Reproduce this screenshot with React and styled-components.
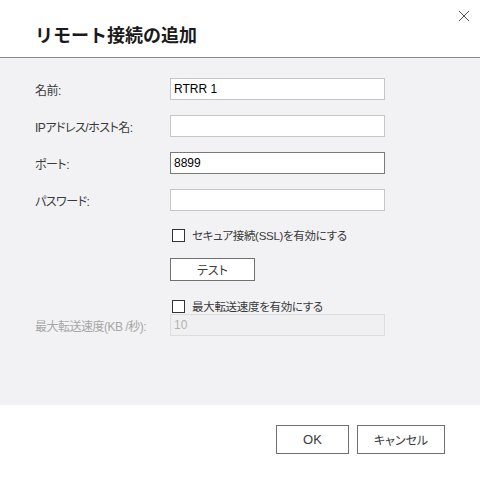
import React from "react";
import styled, { createGlobalStyle } from "styled-components";

const GlobalStyle = createGlobalStyle`
  html, body {
    margin: 0;
    padding: 0;
    background: #ffffff;
  }
  body {
    font-family: "Noto Sans CJK JP", "Liberation Sans", sans-serif;
  }
`;

const font = `"Liberation Sans", "Noto Sans CJK JP", sans-serif`;

const Dialog = styled.div`
  position: relative;
  display: flex;
  flex-direction: column;
  width: 480px;
  height: 480px;
  background: #ffffff;
`;

const Header = styled.div`
  height: 58px;
  box-sizing: border-box;
  padding: 21px 0 0 35px;
  border-bottom: 1px solid #8a8a8a;
`;

const Title = styled.h1`
  margin: 0;
  font-family: "Noto Sans CJK JP", sans-serif;
  font-size: 18px;
  line-height: 26px;
  font-weight: 700;
  color: #1a1a1a;
`;

const CloseButton = styled.button`
  position: absolute;
  top: 8px;
  right: 8px;
  width: 16px;
  height: 16px;
  padding: 0;
  border: none;
  background: none;
  display: flex;
  align-items: center;
  justify-content: center;
  cursor: pointer;
`;

const Body = styled.div`
  height: 347px;
  background: #f2f2f4;
  padding: 0 35px;
  box-sizing: border-box;
  display: flex;
  flex-direction: column;
`;

const Row = styled.div`
  display: flex;
  align-items: center;
  margin-top: ${(p) => p.$top}px;
  height: ${(p) => p.$height || 22}px;
`;

const Label = styled.label`
  width: 135px;
  flex-shrink: 0;
  font-family: ${font};
  font-size: 12px;
  color: ${(p) => (p.$disabled ? "#a6a6a6" : "#3a3a3a")};
  font-feature-settings: "palt";
  letter-spacing: -0.5px;
`;

const TextInput = styled.input`
  width: 215px;
  height: 22px;
  box-sizing: border-box;
  padding: 0 3px;
  margin: 0;
  font-family: ${font};
  font-size: 12px;
  color: ${(p) => (p.disabled ? "#b0b0b0" : "#000000")};
  background: ${(p) => (p.disabled ? "#f0f0f2" : "#ffffff")};
  border: 1px solid ${(p) => (p.$focused ? "#7a7a7a" : p.disabled ? "#dddddd" : "#c6c6c6")};
  outline: none;
`;

const CheckLine = styled.label`
  display: flex;
  align-items: center;
  gap: 7px;
  margin-left: 137px;
  font-family: ${font};
  font-size: 11.5px;
  letter-spacing: -0.3px;
  color: #3a3a3a;
  font-feature-settings: "palt";
`;

const Box = styled.span`
  width: 11px;
  height: 11px;
  border: 1px solid #333333;
  background: #ffffff;
  flex-shrink: 0;
`;

const Button = styled.button`
  height: ${(p) => p.$height || 29}px;
  width: ${(p) => p.$width}px;
  box-sizing: border-box;
  margin: 0;
  padding: 0;
  background: #ffffff;
  border: 1px solid #707070;
  font-family: ${font};
  font-size: ${(p) => p.$size || 12}px;
  color: #3a3a3a;
  font-feature-settings: "palt";
  cursor: pointer;
`;

const TestButton = styled(Button)`
  margin-left: 135px;
`;

const Footer = styled.div`
  flex: 1;
  display: flex;
  justify-content: flex-end;
  align-items: flex-start;
  gap: 8px;
  padding: 20px 35px 0 0;
`;

const CloseIcon = () => (
  <svg width="12" height="12" viewBox="0 0 12 12">
    <path d="M1 1 L11 11 M11 1 L1 11" stroke="#555" strokeWidth="1" fill="none" />
  </svg>
);

const Checkbox = ({ children }) => (
  <CheckLine>
    <Box />
    {children}
  </CheckLine>
);

const App = () => (
  <>
    <GlobalStyle />
    <Dialog>
      <Header>
        <Title>リモート接続の追加</Title>
      </Header>
      <CloseButton aria-label="閉じる">
        <CloseIcon />
      </CloseButton>
      <Body>
        <Row $top={20}>
          <Label>名前:</Label>
          <TextInput defaultValue="RTRR 1" />
        </Row>
        <Row $top={15}>
          <Label>IPアドレス/ホスト名:</Label>
          <TextInput />
        </Row>
        <Row $top={15}>
          <Label>ポート:</Label>
          <TextInput defaultValue="8899" $focused />
        </Row>
        <Row $top={15}>
          <Label>パスワード:</Label>
          <TextInput type="password" />
        </Row>
        <Row $top={17} $height={14}>
          <Checkbox>セキュア接続(SSL)を有効にする</Checkbox>
        </Row>
        <Row $top={16} $height={23}>
          <TestButton $width={85} $height={23}>テスト</TestButton>
        </Row>
        <Row $top={18} $height={14}>
          <Checkbox>最大転送速度を有効にする</Checkbox>
        </Row>
        <Row $top={1}>
          <Label $disabled>最大転送速度(KB /秒):</Label>
          <TextInput defaultValue="10" disabled />
        </Row>
      </Body>
      <Footer>
        <Button $width={73} $size={13}>OK</Button>
        <Button $width={88}>キャンセル</Button>
      </Footer>
    </Dialog>
  </>
);

export default App;
